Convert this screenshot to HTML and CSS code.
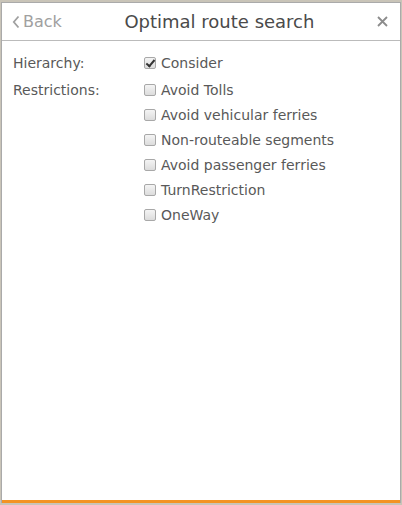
FILE: index.html
```html
<!DOCTYPE html>
<html>
<head>
    <title>Optimal route search</title>
    <meta name="viewport" content="width=device-width, initial-scale=1.0">
    <link rel="stylesheet" href="styles.css">
</head>
<body>
    <div class="panel">
        <!-- Header -->
        <div class="header">
            <a class="back" href="#">
                <svg width="8" height="14" viewBox="0 0 8 14"><path d="M6.5 1.5 L1.8 7 L6.5 12.5" fill="none" stroke="#a0a0a0" stroke-width="1.8"/></svg>
                Back
            </a>
            <div class="title">Optimal route search</div>
            <a class="close" href="#">
                <svg width="11" height="11" viewBox="0 0 11 11"><path d="M1 1 L10 10 M10 1 L1 10" stroke="#8c8c8c" stroke-width="1.8"/></svg>
            </a>
        </div>

        <!-- Options -->
        <div class="options">
            <div class="label">Hierarchy:</div>
            <div class="checks">
                <label><input type="checkbox" checked> Consider</label>
            </div>
            <div class="label">Restrictions:</div>
            <div class="checks">
                <label><input type="checkbox"> Avoid Tolls</label>
                <label><input type="checkbox"> Avoid vehicular ferries</label>
                <label><input type="checkbox"> Non-routeable segments</label>
                <label><input type="checkbox"> Avoid passenger ferries</label>
                <label><input type="checkbox"> TurnRestriction</label>
                <label><input type="checkbox"> OneWay</label>
            </div>
        </div>
        <div class="bottom"></div>
    </div>
</body>
</html>
```
FILE: styles.css
```css
html, body {
    height: 100%;
}
body {
    margin: 0;
    padding: 2px 1px;
    box-sizing: border-box;
    background: #c9c4b8;
    font-family: "DejaVu Sans", Verdana, sans-serif;
    color: #555;
}
.panel {
    height: 100%;
    background: #fff;
    border: 1px solid #aaa;
    border-bottom: none;
    box-sizing: border-box;
    display: flex;
    flex-direction: column;
}
.header {
    display: flex;
    align-items: center;
    height: 37px;
    border-bottom: 1px solid #bbb;
    padding: 0 12px 0 10px;
}
.back {
    display: flex;
    align-items: center;
    gap: 3px;
    color: #a0a0a0;
    text-decoration: none;
    font-size: 16px;
}
.title {
    flex: 1;
    text-align: center;
    font-size: 18px;
    color: #4a4a4a;
}
.close {
    display: flex;
}
.options {
    flex: 1;
    display: grid;
    grid-template-columns: 131px 1fr;
    padding: 12px 11px;
    align-content: start;
    font-size: 14px;
    color: #595959;
}
.label {
    line-height: 20px;
}
.checks {
    display: flex;
    flex-direction: column;
    gap: 5px;
    margin-bottom: 7px;
}
.checks label {
    display: flex;
    align-items: center;
    line-height: 20px;
}
.checks input {
    appearance: none;
    -webkit-appearance: none;
    margin: 0 5px 0 0;
    width: 12px;
    height: 12px;
    border: 1px solid #a8a8a8;
    border-radius: 2px;
    background: linear-gradient(#f4f4f4, #dcdcdc);
    position: relative;
}
.checks input:checked::after {
    content: "";
    position: absolute;
    left: 3px;
    top: 0px;
    width: 3px;
    height: 7px;
    border: solid #333;
    border-width: 0 2px 2px 0;
    transform: rotate(40deg);
}
.bottom {
    height: 3px;
    background: #f39323;
}
```
